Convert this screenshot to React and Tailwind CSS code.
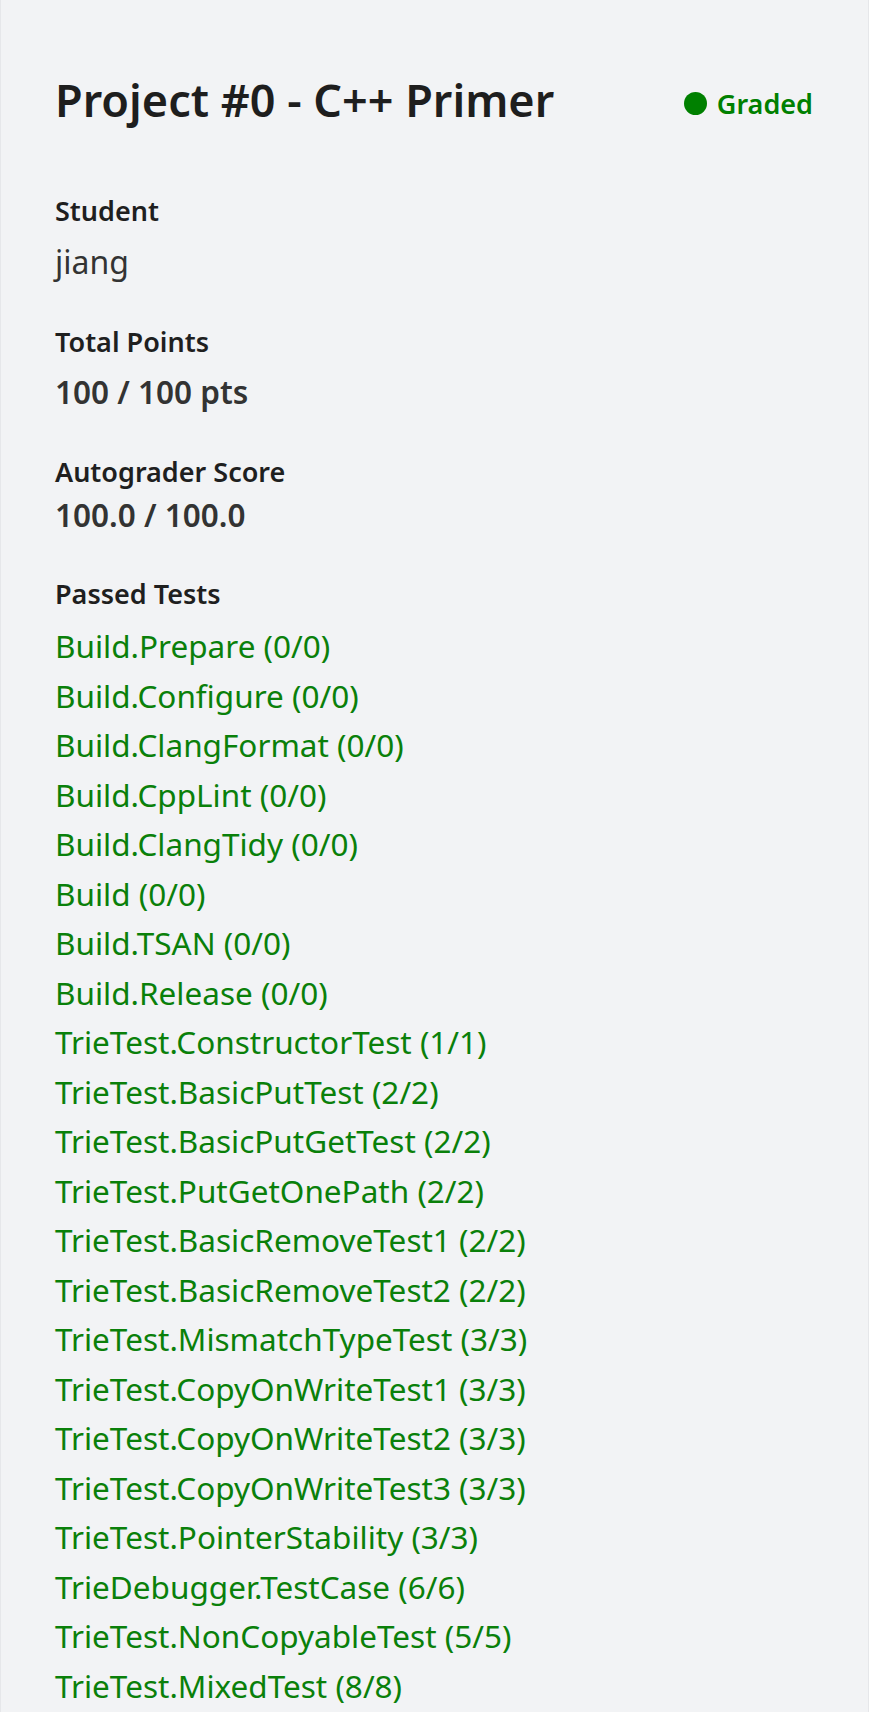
export default function App() {
  const tests = [
    "Build.Prepare (0/0)",
    "Build.Configure (0/0)",
    "Build.ClangFormat (0/0)",
    "Build.CppLint (0/0)",
    "Build.ClangTidy (0/0)",
    "Build (0/0)",
    "Build.TSAN (0/0)",
    "Build.Release (0/0)",
    "TrieTest.ConstructorTest (1/1)",
    "TrieTest.BasicPutTest (2/2)",
    "TrieTest.BasicPutGetTest (2/2)",
    "TrieTest.PutGetOnePath (2/2)",
    "TrieTest.BasicRemoveTest1 (2/2)",
    "TrieTest.BasicRemoveTest2 (2/2)",
    "TrieTest.MismatchTypeTest (3/3)",
    "TrieTest.CopyOnWriteTest1 (3/3)",
    "TrieTest.CopyOnWriteTest2 (3/3)",
    "TrieTest.CopyOnWriteTest3 (3/3)",
    "TrieTest.PointerStability (3/3)",
    "TrieDebugger.TestCase (6/6)",
    "TrieTest.NonCopyableTest (5/5)",
    "TrieTest.MixedTest (8/8)",
  ];
  return (
    <div
      className="min-h-[1712px] bg-[#f2f3f5] border-x border-[#e6e7ea] pl-[54px] pr-[55px] pt-[70px] pb-[10px]"
      style={{ fontFamily: '"Noto Sans", "Open Sans", sans-serif' }}
    >
      <div className="flex items-center justify-between">
        <h1 className="text-[45px] leading-[60px] font-semibold text-[#1e1e1e]">
          Project #0 - C++ Primer
        </h1>
        <div className="flex items-center gap-[10px] text-[27px] leading-[38px] font-semibold text-[#008000] mt-[7px]">
          <span className="block w-[23px] h-[23px] rounded-full bg-[#008000]"></span>
          <span>Graded</span>
        </div>
      </div>

      <div className="mt-[63px] text-[27px] leading-[36px] font-semibold text-[#1f1f1f]">Student</div>
      <div className="mt-[12px] text-[32px] leading-[42px] text-[#333333]">jiang</div>

      <div className="mt-[41px] text-[27px] leading-[36px] font-semibold text-[#1f1f1f]">Total Points</div>
      <div className="mt-[12px] text-[31.5px] leading-[40px] font-semibold text-[#333333]">100 / 100 pts</div>

      <div className="mt-[42px] text-[27px] leading-[36px] font-semibold text-[#1f1f1f]">Autograder Score</div>
      <div className="mt-[5px] text-[31.5px] leading-[40px] font-semibold text-[#333333]">100.0 / 100.0</div>

      <div className="mt-[41px] text-[27px] leading-[36px] font-semibold text-[#1f1f1f]">Passed Tests</div>
      <ul className="mt-[9px]">
        {tests.map((t) => (
          <li key={t} className="text-[31.5px] leading-[49.5px] text-[#0a800a]">
            {t}
          </li>
        ))}
      </ul>
    </div>
  );
}
